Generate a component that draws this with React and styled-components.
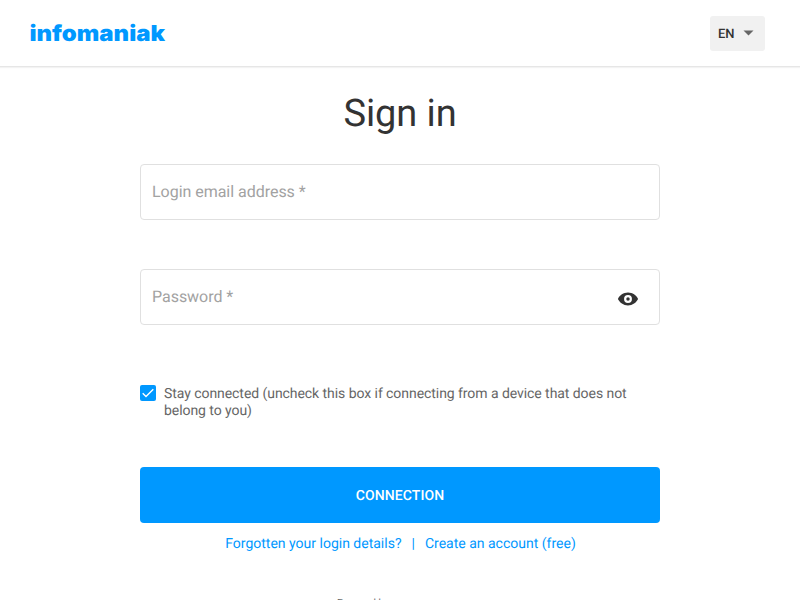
import React from "react";
import styled, { createGlobalStyle } from "styled-components";

const GlobalStyle = createGlobalStyle`
  * { box-sizing: border-box; }
  body { margin: 0; background: #fff; overflow: hidden; font-family: Roboto, sans-serif; text-rendering: geometricPrecision; }
  button { text-rendering: inherit; }
`;
const Page = styled.div`
  height: 600px;
  overflow: hidden;
`;
const Header = styled.header`
  height: 67px;
  display: flex;
  justify-content: space-between;
  align-items: center;
  padding: 0 35px 0 29px;
  border-bottom: 1px solid #e6e6e6;
  box-shadow: 0 1px 1px #f3f3f3;
`;
const Logo = styled.svg`
  width: 140px;
  height: 30px;
  display: block;
`;
const Language = styled.button`
  width: 55px;
  height: 35px;
  display: flex;
  align-items: center;
  gap: 8px;
  padding: 2px 8px 0;
  border: 0;
  border-radius: 3px;
  background: #f1f1f1;
  color: #333;
  font: 500 13px Roboto, sans-serif;
`;
const Arrow = styled.svg`
  width: 11px;
  height: 6px;
  margin-top: -2px;
`;
const Main = styled.main`
  width: 520px;
  margin: 0 auto;
`;
const Title = styled.h1`
  margin: 24px 0 26px;
  font-size: 38px;
  line-height: 47px;
  letter-spacing: -0.1px;
  font-weight: 400;
  text-align: center;
  color: #333;
`;
const Field = styled.div`
  height: 56px;
  display: flex;
  align-items: center;
  justify-content: space-between;
  margin-bottom: 49px;
  padding: 0 20px 0 11px;
  border: 1px solid #e0e0e0;
  border-radius: 4px;
  font-size: 16px;
  line-height: 20px;
  letter-spacing: -0.03px;
  color: #a2a2a2;
`;
const EyeIcon = styled.svg`
  width: 22px;
  height: 22px;
  margin-top: 4px;
`;
const Stay = styled.label`
  display: flex;
  gap: 8px;
  margin-top: 60px;
  font-size: 14px;
  line-height: 17px;
  letter-spacing: -0.06px;
  color: #666;
`;
const StayText = styled.span`
  padding-top: 1px;
`;
const Checkbox = styled.span`
  flex: none;
  width: 16px;
  height: 16px;
  border-radius: 2px;
  background: #0098ff;
  svg { display: block; }
`;
const Submit = styled.button`
  width: 100%;
  height: 56px;
  display: block;
  margin-top: 47px;
  padding: 2px 0 0;
  border: 0;
  border-radius: 4px;
  background: #0098ff;
  color: #fff;
  font: 500 14px Roboto, sans-serif;
  letter-spacing: 0.1px;
`;
const Links = styled.nav`
  display: flex;
  justify-content: center;
  gap: 10px;
  margin-top: 13px;
  padding-left: 1px;
  font-size: 14px;
  line-height: 17px;
  color: #0098ff;
`;
const Footer = styled.footer`
  margin-top: 44px;
  padding-left: 197px;
  font-size: 10px;
  line-height: 13px;
  color: #666;
`;

export default function App() {
  return (
    <Page>
      <GlobalStyle />
      <Header>
        <Logo viewBox="0 0 140 30" role="img" aria-label="infomaniak">
          <text x="0.5" y="23" fontFamily="Inter, sans-serif" fontWeight="900" fontSize="22" textLength="135.5" lengthAdjust="spacingAndGlyphs" fill="#0098ff">infomaniak</text>
        </Logo>
        <Language>
          EN
          <Arrow viewBox="0 0 11 6"><path d="M.5.5h10L5.5 5.5z" fill="#666" /></Arrow>
        </Language>
      </Header>
      <Main>
        <Title>Sign in</Title>
        <Field>Login email address *</Field>
        <Field>
          Password *
          <EyeIcon viewBox="0 0 24 24"><path fill="#333" fillRule="evenodd" d="M12 5C7 5 3 8 1 12c2 4 6 7 11 7s9-3 11-7c-2-4-6-7-11-7zM12 16.3a4.3 4.3 0 1 1 0-8.6 4.3 4.3 0 0 1 0 8.6z" /><circle cx="12" cy="12" r="1.9" fill="#333" /></EyeIcon>
        </Field>
        <Stay>
          <Checkbox><svg width="16" height="16" viewBox="0 0 16 16"><path d="M2.7 8.3l3.3 3.3 7.3-7.3" fill="none" stroke="#fff" strokeWidth="1.4" /></svg></Checkbox>
          <StayText>Stay connected (uncheck this box if connecting from a device that does not belong to you)</StayText>
        </Stay>
        <Submit>CONNECTION</Submit>
        <Links><span>Forgotten your login details?</span><span>|</span><span>Create an account (free)</span></Links>
        <Footer>Powered by</Footer>
      </Main>
    </Page>
  );
}
